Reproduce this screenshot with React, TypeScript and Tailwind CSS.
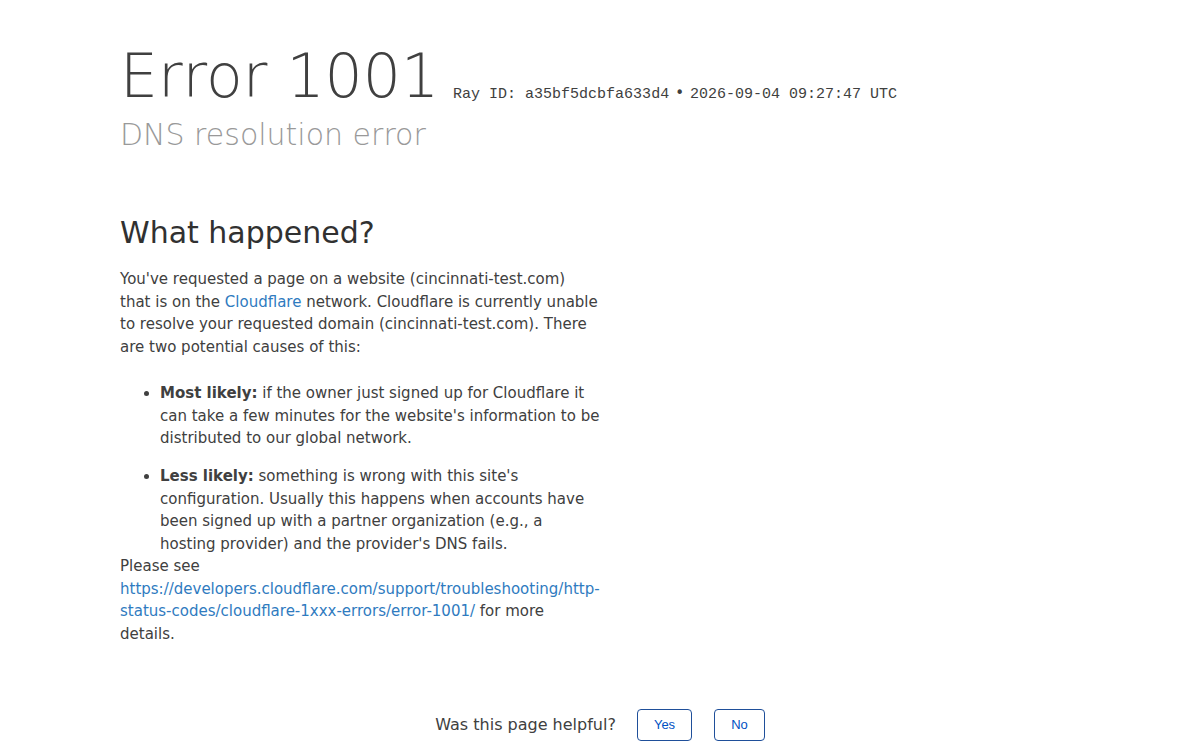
export default function App() {
  return (
    <div className="min-h-screen bg-white text-[#404040] font-['DejaVu_Sans',sans-serif]">
      <div className="mx-auto w-[960px]">
        {/* Header */}
        <header className="pt-[46px]">
          <h1 className="text-[60px] font-light leading-[60px] text-[#404040]">
            <span>Error</span> <span>1001</span>
            <small className="relative top-[1px] ml-[14px] font-['Liberation_Mono',monospace] text-[15px] font-normal text-[#404040]">
              Ray ID: a35bf5dcbfa633d4<span className="mx-[6px] font-['DejaVu_Sans',sans-serif]">•</span>2026-09-04 09:27:47 UTC
            </small>
          </h1>
          <h2 className="-mt-[7px] text-[30px] font-light leading-[36px] text-[#999999]">DNS resolution error</h2>
        </header>

        {/* What happened */}
        <section className="mt-[60px] w-[480px]">
          <h2 className="mb-[15px] text-[30px] leading-[40px] text-[#313131]">What happened?</h2>
          <p className="text-[15px] leading-[22.5px]">
            You've requested a page on a website (cincinnati-test.com) that is on the{' '}
            <a href="#" className="text-[#2f7bbf]">Cloudflare</a> network. Cloudflare is currently unable to resolve
            your requested domain (cincinnati-test.com). There are two potential causes of this:
          </p>
          <ul className="mt-[24px] list-disc space-y-[15.5px] pl-10 text-[15px] leading-[22.5px]">
            <li>
              <span className="font-bold">Most likely:</span> if the owner just signed up for Cloudflare it can take a few
              minutes for the website's information to be distributed to our global network.
            </li>
            <li>
              <span className="font-bold">Less likely:</span> something is wrong with this site's configuration. Usually
              this happens when accounts have been signed up with a partner organization (e.g., a hosting provider) and
              the provider's DNS fails.
            </li>
          </ul>
          <p className="text-[15px] leading-[22.5px]">
            Please see{' '}
            <a href="#" className="text-[#2f7bbf]">
              https://developers.cloudflare.com/support/troubleshooting/http-status-codes/cloudflare-1xxx-errors/error-1001/
            </a>{' '}
            for more details.
          </p>
        </section>

        {/* Feedback */}
        <div className="mt-[64px] flex items-center justify-center gap-[21px]">
          <span className="text-[16px] text-[#404040]">Was this page helpful?</span>
          <div className="flex gap-[22px]">
            <button className="h-[32px] rounded-[4px] border border-[#1f4f9a] px-[16px] font-['Liberation_Sans',sans-serif] text-[13px] text-[#0051c3]">
              Yes
            </button>
            <button className="h-[32px] rounded-[4px] border border-[#1f4f9a] px-[16px] font-['Liberation_Sans',sans-serif] text-[13px] text-[#0051c3]">
              No
            </button>
          </div>
        </div>
      </div>
    </div>
  )
}
